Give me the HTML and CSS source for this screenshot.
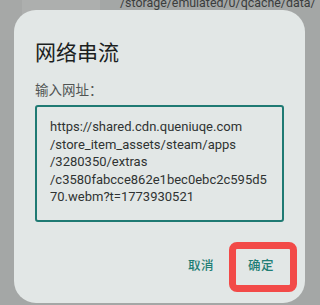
FILE: index.html
```html
<!DOCTYPE html>
<html lang="zh">
<head>
<meta charset="utf-8">
<link rel="stylesheet" href="styles.css">
</head>
<body>
<div class="backdrop">
  <div class="bg-left"></div>
  <div class="bg-mid"></div>
  <div class="bg-path">/storage/emulated/0/qcache/data/</div>
</div>
<div class="dialog">
  <h1 class="title">网络串流</h1>
  <div class="label">输入网址：</div>
  <div class="field">https://shared.cdn.queniuqe.com<br>/store_item_assets/steam/apps<br>/3280350/extras<br>/c3580fabcce862e1bec0ebc2c595d5<br>70.webm?t=1773930521</div>
  <div class="actions">
    <span class="btn">取消</span>
    <span class="btn">确定</span>
  </div>
</div>
<div class="highlight"></div>
</body>
</html>
```
FILE: styles.css
```css
html, body {
  margin: 0;
  padding: 0;
}
body {
  width: 320px;
  height: 305px;
  overflow: hidden;
  background: #a4a7a6;
  font-family: Roboto, "Noto Sans CJK SC", sans-serif;
  position: relative;
}
.backdrop {
  display: flex;
  height: 40px;
}
.bg-left {
  flex: 0 0 22px;
  background: #a6a8a7;
}
.bg-mid {
  flex: 0 0 78px;
  background: #adafae;
}
.bg-path {
  flex: 0 0 auto;
  margin-left: 20px;
  margin-top: -5px;
  font-size: 12.4px;
  line-height: 15px;
  color: #3b3d3d;
  white-space: nowrap;
}
.dialog {
  position: absolute;
  left: 14px;
  top: 10px;
  width: 291px;
  height: 293px;
  box-sizing: border-box;
  background: #e2e7e6;
  border-radius: 22px;
  padding: 26px 21px 0 21px;
}
.title {
  margin: 0;
  font-family: "Noto Sans CJK SC", sans-serif;
  font-weight: 400;
  font-size: 21px;
  line-height: 30px;
  color: #1c1f1f;
}
.label {
  margin-top: 13px;
  font-family: "Noto Sans CJK SC", sans-serif;
  font-size: 13.5px;
  line-height: 20px;
  color: #505453;
}
.field {
  margin-top: 6px;
  width: 249px;
  height: 117px;
  box-sizing: border-box;
  border: 2px solid #1f7a73;
  border-radius: 3px;
  padding: 11px 0 0 13px;
  font-size: 13px;
  line-height: 17.6px;
  color: #2f3332;
  white-space: nowrap;
}
.actions {
  display: flex;
  justify-content: flex-end;
  gap: 34px;
  margin-top: 33px;
  padding-right: 10px;
}
.btn {
  font-family: "Noto Sans CJK SC", sans-serif;
  font-size: 12.5px;
  line-height: 20px;
  font-weight: 500;
  color: #1f7e75;
  letter-spacing: 0.5px;
}
.highlight {
  position: absolute;
  left: 229px;
  top: 242px;
  width: 68px;
  height: 50px;
  box-sizing: border-box;
  border: 7px solid #f24a48;
  border-radius: 8px;
}
```
